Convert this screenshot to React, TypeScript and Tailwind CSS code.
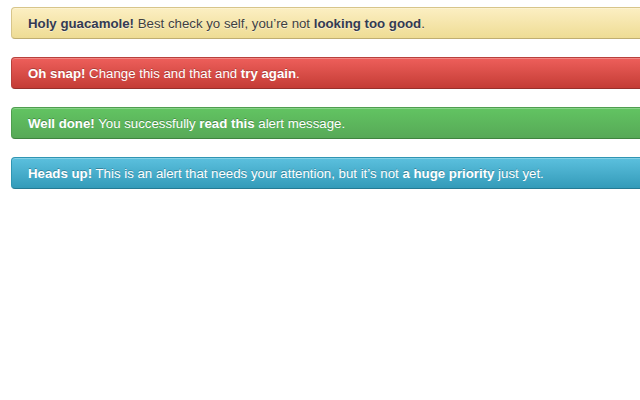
import React from "react";

type Alert = {
  lead: string;
  parts: { text: string; strong?: boolean }[];
  box: string;
  text: string;
  strong: string;
};

const alerts: Alert[] = [
  {
    lead: "Holy guacamole!",
    parts: [
      { text: " Best check yo self, you’re not " },
      { text: "looking too good", strong: true },
      { text: "." },
    ],
    box: "bg-gradient-to-b from-[#fcefc2] to-[#eedc94] border-[#d7c58a] border-b-[#bfae72] [text-shadow:0_1px_0_rgba(255,255,255,0.5)]",
    text: "text-[#404040]",
    strong: "text-[#343a52]",
  },
  {
    lead: "Oh snap!",
    parts: [
      { text: " Change this and that and " },
      { text: "try again", strong: true },
      { text: "." },
    ],
    box: "bg-gradient-to-b from-[#ee5f5b] to-[#c43c35] border-[#b8413b] border-b-[#98302b] [text-shadow:0_-1px_0_rgba(0,0,0,0.25)]",
    text: "text-white",
    strong: "text-white",
  },
  {
    lead: "Well done!",
    parts: [
      { text: " You successfully " },
      { text: "read this", strong: true },
      { text: " alert message." },
    ],
    box: "bg-gradient-to-b from-[#62c462] to-[#57a957] border-[#4f9e4f] border-b-[#3f843f] [text-shadow:0_-1px_0_rgba(0,0,0,0.25)]",
    text: "text-white",
    strong: "text-white",
  },
  {
    lead: "Heads up!",
    parts: [
      { text: " This is an alert that needs your attention, but it’s not " },
      { text: "a huge priority", strong: true },
      { text: " just yet." },
    ],
    box: "bg-gradient-to-b from-[#5bc0de] to-[#339bb9] border-[#2f95b3] border-b-[#257a93] [text-shadow:0_-1px_0_rgba(0,0,0,0.25)]",
    text: "text-white",
    strong: "text-white",
  },
];

export default function App() {
  return (
    <div className="w-[640px] h-[400px] overflow-hidden bg-white font-['Liberation_Sans',Arial,sans-serif] text-[13.25px] leading-[18px]">
      <div className="pt-[7px] pl-[11px] flex flex-col gap-[18px]">
        {alerts.map((a) => (
          <div
            key={a.lead}
            className={`w-[660px] h-[32px] flex items-center pl-[16px] pt-px border rounded-[4px] shadow-[inset_0_1px_0_rgba(255,255,255,0.25)] ${a.box} ${a.text}`}
          >
            <p>
              <strong className={`font-bold ${a.strong}`}>{a.lead}</strong>
              {a.parts.map((p, i) =>
                p.strong ? (
                  <strong key={i} className={`font-bold ${a.strong}`}>
                    {p.text}
                  </strong>
                ) : (
                  <span key={i}>{p.text}</span>
                )
              )}
            </p>
          </div>
        ))}
      </div>
    </div>
  );
}
